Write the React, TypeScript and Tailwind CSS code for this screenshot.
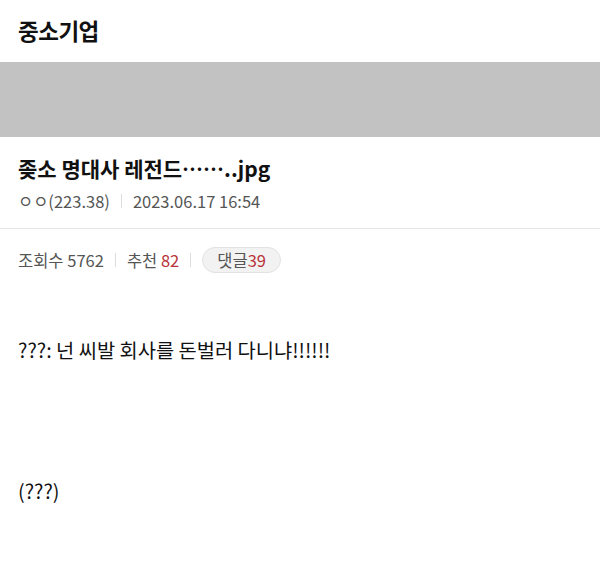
const font = { fontFamily: '"Noto Sans CJK KR", "Noto Sans", sans-serif' };

function Sep() {
  return <span className="mx-[11px] inline-block h-[14px] w-px bg-[#dcdcdc]" />;
}

export default function App() {
  return (
    <div className="h-[567px] w-[600px] overflow-hidden bg-white text-[#111]" style={font}>
      <div className="flex h-[62px] items-center px-[18px]">
        <h1 className="text-[22.5px] font-bold tracking-[-0.5px]">중소기업</h1>
      </div>
      <div className="h-[75px] bg-[#c2c2c2]" />
      <div className="border-b border-[#e6e6e6] px-[18px] pb-[15px] pt-[14px]">
        <h2 className="text-[21px] font-bold leading-[34px]">
          좆소 명대사 레전드……..jpg
        </h2>
        <div className="mt-[4px] flex items-center text-[16.5px] leading-[24px] text-[#555]">
          <span>ㅇㅇ(223.38)</span>
          <Sep />
          <span>2023.06.17 16:54</span>
        </div>
      </div>
      <div className="mt-[18px] flex h-[26px] items-center px-[18px] text-[16.5px] text-[#555]">
        <span>조회수 5762</span>
        <Sep />
        <span>
          추천 <span className="text-[#b8333a]">82</span>
        </span>
        <Sep />
        <span className="rounded-full border border-[#e2e2e2] bg-[#f2f2f2] px-[14px] leading-[24px]">
          댓글<span className="text-[#b8333a]">39</span>
        </span>
      </div>
      <div className="px-[18px] pt-[63px] text-[19.8px] leading-[28px] text-[#111]">
        <p>???: 넌 씨발 회사를 돈벌러 다니냐!!!!!!</p>
        <p className="mt-[113px]">(???)</p>
      </div>
    </div>
  );
}
